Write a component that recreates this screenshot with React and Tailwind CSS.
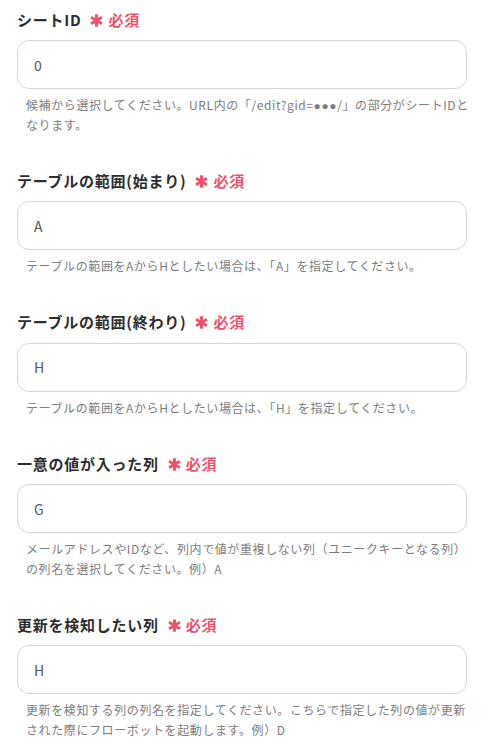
import React from 'react';

const Dots = () => <span className="font-['Liberation_Sans'] leading-[0]">●●●</span>;

const fields = [
  {
    label: 'シートID',
    value: '0',
    help: (
      <>
        候補から選択してください。URL内の「/edit?gid=<Dots />/」の部分がシートIDとなります。
      </>
    ),
  },
  {
    label: 'テーブルの範囲(始まり)',
    value: 'A',
    help: 'テーブルの範囲をAからHとしたい場合は、「A」を指定してください。',
  },
  {
    label: 'テーブルの範囲(終わり)',
    value: 'H',
    help: 'テーブルの範囲をAからHとしたい場合は、「H」を指定してください。',
  },
  {
    label: '一意の値が入った列',
    value: 'G',
    help: 'メールアドレスやIDなど、列内で値が重複しない列（ユニークキーとなる列）の列名を選択してください。例）A',
  },
  {
    label: '更新を検知したい列',
    value: 'H',
    help: '更新を検知する列の列名を指定してください。こちらで指定した列の値が更新された際にフローボットを起動します。例）D',
  },
];

// 必須マークの太いアスタリスク
const Asterisk = () => (
  <svg width="13" height="13" viewBox="0 0 12 12" className="shrink-0">
    <g stroke="#f0506a" strokeWidth="2.7">
      <line x1="6" y1="0.3" x2="6" y2="11.7" />
      <line x1="1" y1="3.1" x2="11" y2="8.9" />
      <line x1="1" y1="8.9" x2="11" y2="3.1" />
    </g>
  </svg>
);

const Field = ({ field }) => (
  <div className="mb-[35px]">
    <div className="flex items-center h-6">
      <span className="text-[15px] font-bold tracking-wider text-[#2d2d2d]">{field.label}</span>
      <span className="ml-[9px] flex items-center gap-[5px] text-[15px] font-bold tracking-wider text-[#f0506a]">
        <Asterisk />
        必須
      </span>
    </div>
    <div className="mt-2 h-[49px] w-full rounded-xl border border-[#d3d6dd] bg-white flex items-center px-4 text-sm tracking-wider text-[#555]">
      {field.value}
    </div>
    <p className="mt-[6px] ml-[9px] mr-[-6px] text-xs leading-[19.5px] tracking-wider text-[#7d7d7d]">
      {field.help}
    </p>
  </div>
);

export default function App() {
  return (
    <div
      className="min-h-screen bg-white pl-[17px] pr-[24px] pt-2"
      style={{ fontFamily: '"Noto Sans CJK JP", "Noto Sans", sans-serif' }}
    >
      {fields.map((f, idx) => (
        <Field key={idx} field={f} />
      ))}
    </div>
  );
}
